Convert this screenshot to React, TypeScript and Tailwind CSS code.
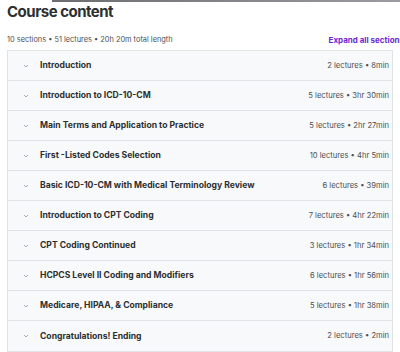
import { useState } from 'react';

const sections = [
  { title: 'Introduction', meta: '2 lectures • 8min' },
  { title: 'Introduction to ICD-10-CM', meta: '5 lectures • 3hr 30min' },
  { title: 'Main Terms and Application to Practice', meta: '5 lectures • 2hr 27min' },
  { title: 'First -Listed Codes Selection', meta: '10 lectures • 4hr 5min' },
  { title: 'Basic ICD-10-CM with Medical Terminology Review', meta: '6 lectures • 39min' },
  { title: 'Introduction to CPT Coding', meta: '7 lectures • 4hr 22min' },
  { title: 'CPT Coding Continued', meta: '3 lectures • 1hr 34min' },
  { title: 'HCPCS Level II Coding and Modifiers', meta: '6 lectures • 1hr 56min' },
  { title: 'Medicare, HIPAA, & Compliance', meta: '5 lectures • 1hr 38min' },
  { title: 'Congratulations! Ending', meta: '2 lectures • 2min' },
];

const Chevron = () => (
  <svg width="8" height="8" viewBox="0 0 8 8" className="text-gray-400">
    <path d="M2 3 L4 5 L6 3" fill="none" stroke="currentColor" strokeWidth="0.9" />
  </svg>
);

const App = () => {
  const [open, setOpen] = useState<number | null>(null);

  return (
    <div className="w-[400px] h-[352px] overflow-hidden bg-white font-['Inter',sans-serif] text-[#2d2f31]">
      <div className="ml-[52px] h-[2px] bg-gradient-to-r from-[#6b6d70] to-[#9a9c9f]" />
      <h2 className="pl-[7px] mt-[1px] text-[15px] leading-[18px] font-bold tracking-[-0.5px]">Course content</h2>
      <div className="flex items-center justify-between pl-[7px] mt-[13px] h-[12px]">
        <span className="text-[7.4px] text-[#4d4f52]">10 sections • 51 lectures • 20h 20m total length</span>
        <span className="text-[8px] font-bold text-[#6d28d2] whitespace-nowrap -mr-[4px]">Expand all sections</span>
      </div>
      <div className="ml-[7px] mr-[7px] mt-[4px] border border-[#dfe3e6]">
        {sections.map((s, i) => (
          <div
            key={i}
            onClick={() => setOpen(open === i ? null : i)}
            className="flex items-center h-[30px] bg-[#f7f9fa] border-b border-[#dfe3e6] last:border-b-0 pl-[14px] pr-[3px] cursor-pointer"
          >
            <Chevron />
            <span className="ml-[10px] text-[8.6px] font-bold text-[#2d2f31]">{s.title}</span>
            <span className="ml-auto text-[7.6px] text-[#4d4f52]">{s.meta}</span>
          </div>
        ))}
      </div>
    </div>
  );
};

export default App;
